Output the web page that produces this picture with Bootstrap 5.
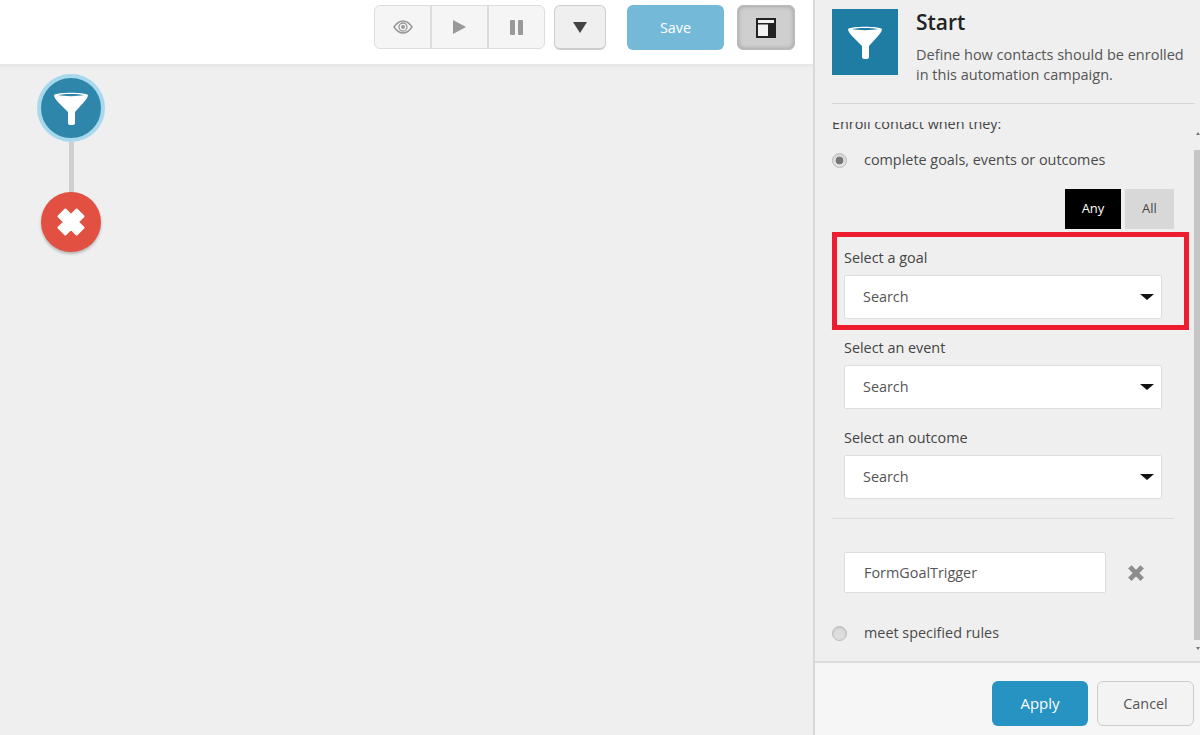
<!DOCTYPE html>
<html lang="en"><head><meta charset="utf-8"><title>Start</title>
<link href="https://cdn.jsdelivr.net/npm/bootstrap@5.3.0/dist/css/bootstrap.min.css" rel="stylesheet">
<style>
html,body{height:735px;overflow:hidden}
body{font-family:"Open Sans",sans-serif;font-size:14.4px;color:#444;background:#efefef}
.shell{height:735px}
.stage{width:813px;height:735px}
.topbar{height:67px;background:#fff;border-bottom:3px solid #e8e8e8;padding:5px 18px 0 0;gap:9px}
.tb-group{height:44px;width:171px;border:1px solid #ddd;border-radius:6px;background:#f5f5f5;overflow:hidden}
.tb-group>span{flex:1;display:flex;align-items:center;justify-content:center;border-right:2px solid #ddd}
.tb-group>span:last-child{border-right:0}
.tb-more{width:52px;height:45px;border:1px solid #ccc;border-bottom-width:2px;border-radius:6px;background:#efefef}
.tb-save{width:97px;height:45px;border-radius:6px;background:#74b9d7;color:#fff;font-weight:500;font-size:14.4px;margin-left:12px}
.tb-layout{width:58px;height:45px;border-radius:6px;background:#cfcfcf;border:1px solid #bbb;box-shadow:inset 0 0 5px #999;margin-left:4px}
.canvas-area{padding:7px 0 0 37px}
.node-start{width:68px;height:68px;border-radius:50%;background:#2e87ab;border:4px solid #a8d8ee}
.node-link{width:5px;height:52px;background:#cfcfcf;margin-left:32px}
.node-end{width:60px;height:60px;border-radius:50%;background:#e25041;box-shadow:0 2px 3px rgba(0,0,0,.25);margin:-2px 0 0 4px}
.side{width:387px;height:735px;border-left:2px solid #d9d9d9;background:#efefef}
.side-head{padding:9px 5px 0 17px;height:104px}
.side-head-in{border-bottom:1px solid #d6d6d6;height:95px;gap:18px}
.head-icon{width:66px;height:66px;background:#1f7ca3;flex:none}
.head-title{font-size:21px;font-weight:600;color:#222;line-height:26px;margin:0 0 10px}
.head-desc{font-size:14.5px;line-height:20px;color:#555;margin:0}
.side-body{height:538px;padding:0 0 0 17px;overflow:hidden;margin-top:18px}
.enroll{margin:-8px 0 0;line-height:20px;color:#444}
.radio-row{gap:17px;height:20px;color:#4a4a4a}
.radio-dot{width:15px;height:15px;border-radius:50%;background:#ddd;border:1px solid #bbb;box-shadow:inset 0 1px 2px rgba(0,0,0,.12);flex:none}
.radio-on{background:radial-gradient(circle,#777 0 3.6px,#e2e2e2 4.2px)}
.any-all{gap:4px;margin:19px 26px 0 0;justify-content:flex-end}
.any-all span{height:40px;display:flex;align-items:center;justify-content:center;font-size:13px}
.any-on{width:56px;background:#000;color:#fff}
.any-off{width:49px;background:#d8d8d8;color:#444}
.goal-frame{width:357px;height:98px;border:5px solid #ed1c2e;padding:11px 0 0 7px;margin-top:3px}
.plain-field{padding-left:12px;margin-top:8px}
.plain-field+.plain-field{margin-top:19px}
.fld-label{line-height:20px;margin:0 0 7px;color:#444}
.goal-frame .fld-label{margin-bottom:7px}
.fld-select{width:318px;height:44px;background:#fff;border:1px solid #ddd;border-radius:2px;padding:0 7px 0 18px;color:#555}
.caret-d{width:0;height:0;border-left:7px solid transparent;border-right:7px solid transparent;border-top:6px solid #111}
.rule{width:342px;border-top:1px solid #dcdcdc;margin:19px 0 0}
.trig-row{padding-left:12px;margin-top:33px;gap:21px}
.trig-box{width:262px;height:41px;background:#fff;border:1px solid #ddd;border-radius:2px;padding-left:19px;color:#555}
.last-radio{margin-top:30px}
.sbar{position:absolute;right:0;top:150px;width:6px;height:490px;background:#c6c6c6}
.sbar-up,.sbar-down{position:absolute;right:0;width:0;height:0;border-left:2px solid transparent;border-right:2px solid transparent}
.sbar-up{top:132px;border-bottom:3px solid #777}
.sbar-down{top:647px;border-top:3px solid #777}
.side-foot{height:74px;background:#f6f6f6;border-top:2px solid #ddd;padding:18px 6px 0 0;gap:9px;position:absolute;left:815px;right:0;top:661px}
.btn-apply{width:96px;height:45px;border-radius:6px;background:#2793c3;color:#fff;font-size:15px}
.btn-cancel{width:97px;height:45px;border-radius:6px;background:#f3f3f3;border:1px solid #ccc;color:#555}
</style></head>
<body>
<div class="shell d-flex position-relative">
  <div class="stage d-flex flex-column">
    <div class="topbar d-flex justify-content-end align-items-start">
      <div class="tb-group d-flex">
        <span><svg width="20" height="14" viewBox="0 0 20 14"><path d="M1 7C4 2.500 7 1 10 1s6 1.500 9 6c-3 4.500-6 6-9 6s-6-1.500-9-6z" fill="none" stroke="#999" stroke-width="1.500"/><circle cx="10" cy="7" r="4" fill="none" stroke="#999" stroke-width="1.300"/><circle cx="10" cy="7" r="2" fill="#999"/></svg></span>
        <span><svg width="15" height="16" viewBox="0 0 15 16"><path d="M1 1l13 7-13 7z" fill="#999"/></svg></span>
        <span><svg width="14" height="15" viewBox="0 0 14 15"><rect x="0" y="0" width="5" height="15" rx="1" fill="#999"/><rect x="8" y="0" width="5" height="15" rx="1" fill="#999"/></svg></span>
      </div>
      <div class="tb-more d-flex align-items-center justify-content-center"><svg width="14" height="11" viewBox="0 0 14 11"><path d="M0 0h14L7 11z" fill="#444"/></svg></div>
      <div class="tb-save d-flex align-items-center justify-content-center">Save</div>
      <div class="tb-layout d-flex align-items-center justify-content-center"><svg width="20" height="20" viewBox="0 0 20 20"><rect x="1" y="1" width="18" height="18" fill="#f2f2f2" stroke="#222" stroke-width="2"/><rect x="1" y="5" width="18" height="1.500" fill="#222"/><rect x="12" y="6" width="7" height="13" fill="#222"/></svg></div>
    </div>
    <div class="canvas-area">
      <div class="node-start d-flex align-items-center justify-content-center">
        <svg width="36" height="36" viewBox="0 0 36 36"><path d="M1 5c3-3 31-3 34 0 0 2-2 5-4 7l-9 10v11c0 1.500-1 2-3 2h-2c-1 0-2-1-2-2V22L5 12C3 10 1 7 1 5z" fill="#fff"/><path d="M5 5c5-1.500 21-1.500 26 0-5 1.500-21 1.500-26 0z" fill="#2e87ab"/></svg>
      </div>
      <div class="node-link"></div>
      <div class="node-end d-flex align-items-center justify-content-center">
        <svg width="36" height="36" viewBox="0 0 32 32"><path d="M5 11l6-6 5 5 5-5 6 6-5 5 5 5-6 6-5-5-5 5-6-6 5-5z" fill="#fff" stroke="#fff" stroke-width="2" stroke-linejoin="round"/></svg>
      </div>
    </div>
  </div>
  <div class="side position-relative">
    <div class="side-head">
      <div class="side-head-in d-flex align-items-start">
        <div class="head-icon d-flex align-items-center justify-content-center">
          <svg width="36" height="36" viewBox="0 0 36 36"><path d="M1 5c3-3 31-3 34 0 0 2-2 5-4 7l-9 10v11c0 1.500-1 2-3 2h-2c-1 0-2-1-2-2V22L5 12C3 10 1 7 1 5z" fill="#fff"/><path d="M5 5c5-1.500 21-1.500 26 0-5 1.500-21 1.500-26 0z" fill="#1f7ca3"/></svg>
        </div>
        <div>
          <h1 class="head-title">Start</h1>
          <p class="head-desc">Define how contacts should be enrolled<br>in this automation campaign.</p>
        </div>
      </div>
    </div>
    <div class="side-body">
      <p class="enroll">Enroll contact when they:</p>
      <div class="radio-row d-flex align-items-center mt-3"><span class="radio-dot radio-on"></span><span>complete goals, events or outcomes</span></div>
      <div class="any-all d-flex"><span class="any-on">Any</span><span class="any-off">All</span></div>
      <div class="goal-frame">
        <p class="fld-label">Select a goal</p>
        <div class="fld-select d-flex align-items-center justify-content-between"><span>Search</span><span class="caret-d"></span></div>
      </div>
      <div class="plain-field">
        <p class="fld-label">Select an event</p>
        <div class="fld-select d-flex align-items-center justify-content-between"><span>Search</span><span class="caret-d"></span></div>
      </div>
      <div class="plain-field">
        <p class="fld-label">Select an outcome</p>
        <div class="fld-select d-flex align-items-center justify-content-between"><span>Search</span><span class="caret-d"></span></div>
      </div>
      <div class="rule"></div>
      <div class="trig-row d-flex align-items-center">
        <div class="trig-box d-flex align-items-center">FormGoalTrigger</div>
        <svg width="18" height="18" viewBox="0 0 16 16"><path d="M1 4l3-3 4 4 4-4 3 3-4 4 4 4-3 3-4-4-4 4-3-3 4-4z" fill="#8d8d8d"/></svg>
      </div>
      <div class="radio-row last-radio d-flex align-items-center"><span class="radio-dot"></span><span>meet specified rules</span></div>
    </div>
    <div class="sbar-up"></div>
    <div class="sbar"></div>
    <div class="sbar-down"></div>
  </div>
  <div class="side-foot d-flex justify-content-end align-items-start">
    <div class="btn-apply d-flex align-items-center justify-content-center">Apply</div>
    <div class="btn-cancel d-flex align-items-center justify-content-center">Cancel</div>
  </div>
</div>
<script src="https://cdn.jsdelivr.net/npm/bootstrap@5.3.0/dist/js/bootstrap.bundle.min.js"></script>
</body></html>
